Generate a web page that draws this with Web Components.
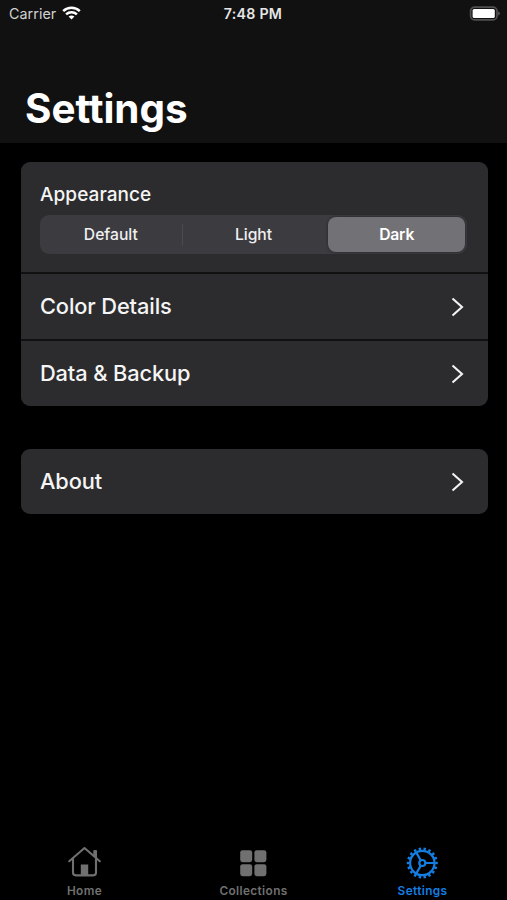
<!DOCTYPE html>
<html lang="en">
<head>
<meta charset="utf-8">
<title>Settings</title>
<style>
html,body{margin:0;height:100%;background:#000;overflow:hidden}
body{font-family:Inter,"Liberation Sans",sans-serif;color:#f5f5f5}
</style>
</head>
<body>
<settings-app></settings-app>
<script>
function define(name, html, setup){
  const tpl=document.createElement('template');
  tpl.innerHTML=html;
  customElements.define(name,class extends HTMLElement{
    constructor(){
      super();
      this.attachShadow({mode:'open'}).append(tpl.content.cloneNode(true));
    }
    connectedCallback(){ if(setup) setup(this,this.shadowRoot); }
  });
}

define('status-bar',`
<style>
:host{display:grid;grid-template-columns:1fr auto 1fr;align-items:center;height:28px;padding:0 7px 0 9px;color:#e6e6e6;font-size:14.3px;line-height:28px}
.left{display:flex;align-items:center;gap:5.5px;letter-spacing:.05px;color:#d2d2d2}
.left svg{margin-top:-2px}
.time{font-weight:600;font-size:14.2px;letter-spacing:.25px;margin-right:2px;margin-left:-1px}
.right{display:flex;justify-content:flex-end}
.right svg{margin-top:-2px}
svg{display:block}
</style>
<div class="left"><span>Carrier</span>
<svg width="19" height="14" viewBox="0 0 19 14" fill="none" stroke="#fff" stroke-width="2.5"><path d="M1.2 5.2A12 12 0 0 1 17.8 5.2"/><path d="M4.1 8.3A8 8 0 0 1 14.9 8.3"/><path d="M9.5 13.6L6.6 10.6Q9.5 8.3 12.4 10.6Z" fill="#fff" stroke="none"/></svg></div>
<span class="time">7:48 PM</span>
<div class="right"><svg width="31" height="15" viewBox="0 0 31 15"><rect x="1.6" y="1.1" width="26.4" height="12.8" rx="4" fill="none" stroke="#505050" stroke-width="1.7"/><rect x="3.6" y="3" width="22.2" height="9" rx="1.6" fill="#fff"/><path d="M29.2 5.3Q32.6 7.5 29.2 9.7Z" fill="#5b5b5b"/></svg></div>`);

define('page-header',`
<style>
:host{display:flex;flex-direction:column;height:143px;background:#111;box-sizing:border-box}
h1{margin:56px 0 0 25px;font-size:40.4px;line-height:50px;font-weight:700;letter-spacing:-.05px;color:#fff}
</style><slot name="status"></slot><h1><slot></slot></h1>`);

define('settings-card',`
<style>
:host{display:flex;flex-direction:column;gap:2px;background:#111112;border-radius:9px;overflow:hidden}
</style><slot></slot>`);

define('settings-row',`
<style>
:host{display:flex;align-items:center;justify-content:space-between;height:65px;padding:0 24px 0 19.5px;background:#2c2c2e;font-size:21.8px;font-weight:550;box-sizing:border-box}
span{letter-spacing:-.12px;margin-top:-1px}
svg{display:block}
</style><span><slot></slot></span>
<svg width="13" height="20" viewBox="0 0 13 20" fill="none" stroke="#f2f2f2" stroke-width="2.1"><path d="M1.5 1.5L11 10L1.5 18.5"/></svg>`);

define('segment-control',`
<style>
:host{display:grid;grid-template-columns:1fr 1fr 1fr;height:39px;border-radius:9px;background:#3c3b40;box-sizing:border-box;padding:2px 1px}
</style><slot></slot>`);

define('segment-option',`
<style>
:host{display:flex;align-items:center;justify-content:center;font-size:15.7px;font-weight:500;letter-spacing:-.02px;border-radius:8px;color:#efeff0;box-sizing:border-box}
:host([divided]){padding-right:2px;background:linear-gradient(#4b4a50,#4b4a50) right center/1px 22px no-repeat}
:host([selected]){background:#727176;font-weight:600;letter-spacing:-.2px;color:#fff;margin:0 1px 0 4px;box-shadow:0 0 3px #242426}
</style><slot></slot>`);

define('appearance-panel',`
<style>
:host{display:flex;flex-direction:column;height:110px;padding:19px 20.5px 0 19.5px;background:#2c2c2e;box-sizing:border-box}
h2{margin:0 0 6px;font-size:19px;line-height:28px;font-weight:550;letter-spacing:.06px}
</style><h2><slot name="title"></slot></h2><slot></slot>`);

const icons={
home:`<svg width="36" height="34" viewBox="0 0 36 34" fill="none" stroke="currentColor" stroke-width="2.1" stroke-linejoin="round" stroke-linecap="round"><path d="M3.2 16.2L18.5 3L33.8 16.2"/><path d="M7 14V27.6Q7 30.4 9.8 30.4H27.2Q30 30.4 30 27.6V14"/><path d="M27.8 10.3V5.6H30.5V13Z" fill="currentColor" stroke-width="1"/><path d="M14.8 19.5H22.2V30.4H14.8Z" fill="currentColor" stroke="none"/></svg>`,
grid:`<svg width="36" height="34" viewBox="0 0 36 34" fill="currentColor"><rect x="5.2" y="5.2" width="12" height="12" rx="2.4"/><rect x="19.4" y="5.2" width="12" height="12" rx="2.4"/><rect x="5.2" y="19.2" width="12" height="12" rx="2.4"/><rect x="19.4" y="19.2" width="12" height="12" rx="2.4"/></svg>`,
gear:`<svg width="36" height="34" viewBox="0 0 36 34" fill="none" stroke="currentColor" stroke-width="2.2"><circle cx="18.3" cy="18" r="12.2"/><circle cx="18.3" cy="18" r="14.2" stroke-width="2.6" pathLength="72" stroke-dasharray="2 2" stroke-dashoffset="1"/><circle cx="18.3" cy="18" r="3"/><path d="M21.3 18H30.5M16.8 15.4L12.1 7.3M16.8 20.6L12.1 28.7"/></svg>`
};
define('tab-item',`
<style>
:host{display:flex;flex-direction:column;align-items:center;color:#707070;font-size:11.8px;font-weight:600;letter-spacing:.38px;line-height:16px}
:host([active]){color:#147ee2}
i{display:block;height:38px;margin-right:1px}
svg{display:block}
</style><i></i><span><slot></slot></span>`,(el,root)=>{root.querySelector('i').innerHTML=icons[el.getAttribute('icon')];});

define('tab-bar',`
<style>
:host{display:grid;grid-template-columns:1fr 1fr 1fr;height:55px;flex:none}
</style><slot></slot>`);

define('settings-app',`
<style>
:host{display:flex;flex-direction:column;width:507px;height:900px;background:#000}
main{flex:1;display:flex;flex-direction:column;gap:43px;padding:19px 19.5px 0 20.5px}
</style>
<page-header><status-bar slot="status"></status-bar>Settings</page-header>
<main>
<settings-card>
<appearance-panel><span slot="title">Appearance</span>
<segment-control><segment-option divided>Default</segment-option><segment-option>Light</segment-option><segment-option selected>Dark</segment-option></segment-control>
</appearance-panel>
<settings-row>Color Details</settings-row>
<settings-row>Data &amp; Backup</settings-row>
</settings-card>
<settings-card><settings-row>About</settings-row></settings-card>
</main>
<tab-bar><tab-item icon="home">Home</tab-item><tab-item icon="grid">Collections</tab-item><tab-item icon="gear" active>Settings</tab-item></tab-bar>`);
</script>
</body>
</html>
